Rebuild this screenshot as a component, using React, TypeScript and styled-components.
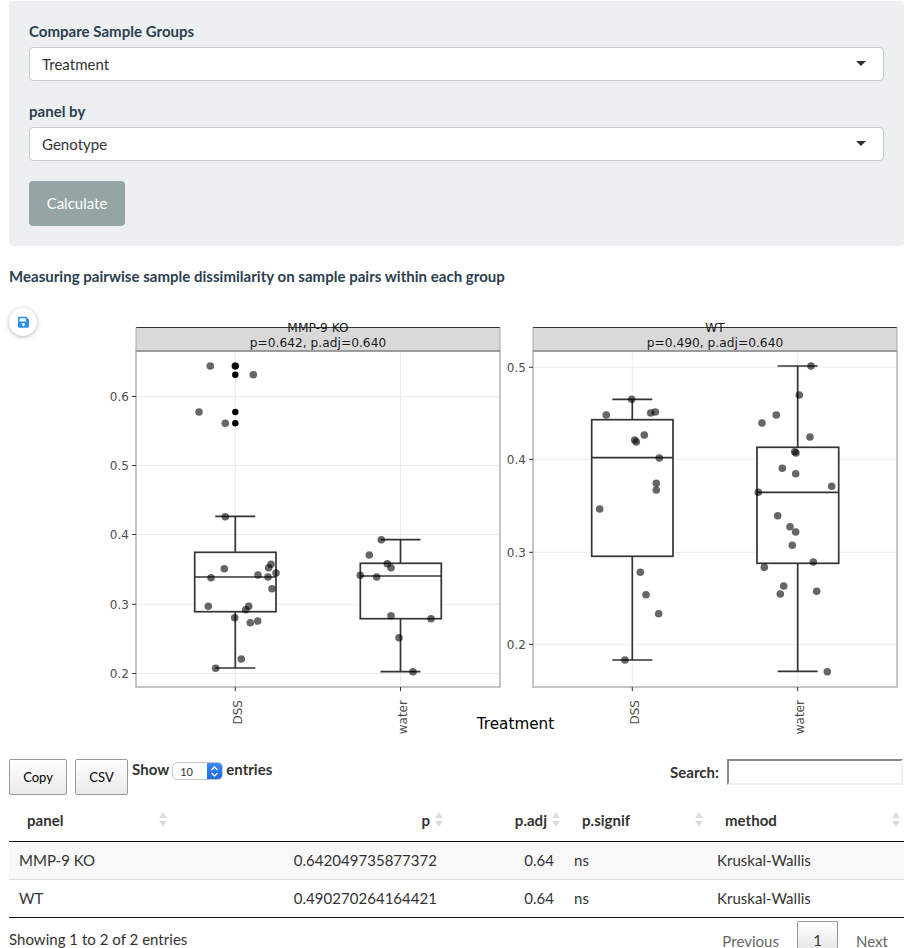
import { FC } from 'react';
import styled, { createGlobalStyle } from 'styled-components';
import { FaSave } from 'react-icons/fa';

type Pt = [number, number];

interface BoxData {
  label: string;
  labelX: number;
  cx: number;
  left: number;
  right: number;
  q3: number;
  median: number;
  q1: number;
  top: number;
  bottom: number;
}

interface FacetData {
  title: string;
  stat: string;
  left: number;
  right: number;
  ticks: { label: string; y: number }[];
  boxes: BoxData[];
  outliers: Pt[];
  points: Pt[];
}

const facets: FacetData[] = [
  {
    title: 'MMP-9 KO',
    stat: 'p=0.642, p.adj=0.640',
    left: 136,
    right: 500,
    ticks: [
      { label: '0.6', y: 396.5 },
      { label: '0.5', y: 465.5 },
      { label: '0.4', y: 534.5 },
      { label: '0.3', y: 604.3 },
      { label: '0.2', y: 673.5 },
    ],
    boxes: [
      { label: 'DSS', labelX: 241.5, cx: 235.3, left: 194.7, right: 276, q3: 552.3, median: 577, q1: 611.7, top: 516.3, bottom: 668 },
      { label: 'water', labelX: 407, cx: 400.5, left: 360.3, right: 441.3, q3: 563.3, median: 576, q1: 618.7, top: 539.7, bottom: 671.7 },
    ],
    outliers: [[235.3, 366], [235.3, 366], [235.3, 374.7], [235.3, 412], [235.3, 423.3]],
    points: [
      [210.3, 366], [235.3, 366], [253.3, 374.7], [199, 412], [225.3, 423.3], [225.3, 516.7],
      [224.3, 568.7], [211, 577.7], [258, 575], [268, 577], [276, 573], [268.7, 567.7], [271, 564.3],
      [272, 588.7], [208.3, 606.3], [248.7, 606.3], [245.7, 609.7], [234.7, 617.7], [257.7, 621],
      [250.3, 622.7], [241.3, 659], [215.7, 668.3],
      [381.3, 539.7], [369.3, 555], [387.3, 563.7], [391, 567.7], [360.3, 575.3], [376.7, 577],
      [391, 615.7], [431, 618.7], [399, 637.7], [413, 671.7],
    ],
  },
  {
    title: 'WT',
    stat: 'p=0.490, p.adj=0.640',
    left: 533,
    right: 897,
    ticks: [
      { label: '0.5', y: 367.3 },
      { label: '0.4', y: 459.3 },
      { label: '0.3', y: 552.3 },
      { label: '0.2', y: 644.3 },
    ],
    boxes: [
      { label: 'DSS', labelX: 638.5, cx: 632.3, left: 591.7, right: 673, q3: 419.7, median: 457.7, q1: 556.3, top: 399.3, bottom: 660 },
      { label: 'water', labelX: 804, cx: 797.7, left: 757, right: 838.7, q3: 447.3, median: 492.3, q1: 563.3, top: 366, bottom: 671.3 },
    ],
    outliers: [],
    points: [
      [631.7, 399.3], [606.3, 415], [650.7, 413], [655.3, 412], [644.3, 435], [634.7, 440], [636.3, 442],
      [659.3, 458], [656.3, 483.3], [656.3, 490], [599.7, 509], [640.3, 572.3], [646, 594.7],
      [658.7, 613.7], [625, 660],
      [811, 366], [799.3, 395], [762, 423], [776.3, 415], [810, 437], [794.7, 451.7], [796, 453],
      [782.3, 468.3], [795.7, 473.7], [831.7, 486.3], [758.3, 492.3], [777.7, 515.7], [790, 526.7],
      [795.7, 532], [792.3, 545.3], [813.3, 562], [764.3, 567.3], [783.7, 586], [780.3, 594],
      [816.7, 591.3], [827.3, 671.7],
    ],
  },
];

const rows = [
  { panel: 'MMP-9 KO', p: '0.642049735877372', adj: '0.64', signif: 'ns', method: 'Kruskal-Wallis' },
  { panel: 'WT', p: '0.490270264164421', adj: '0.64', signif: 'ns', method: 'Kruskal-Wallis' },
];

const STRIP_TOP = 327.5;
const PANEL_TOP = 351;
const PANEL_BOTTOM = 687;

const Facet: FC<{ data: FacetData }> = ({ data }) => {
  const { left, right } = data;
  const mid = (left + right) / 2;
  return (
    <g>
      <rect x={left} y={STRIP_TOP} width={right - left} height={PANEL_TOP - STRIP_TOP} fill="#d9d9d9" />
      {data.ticks.map((t) => (
        <line key={t.label} x1={left} x2={right} y1={t.y} y2={t.y} stroke="#ebebeb" strokeWidth="1" />
      ))}
      {data.boxes.map((b) => (
        <line key={b.label} x1={b.cx} x2={b.cx} y1={PANEL_TOP} y2={PANEL_BOTTOM} stroke="#ebebeb" strokeWidth="1" />
      ))}
      {data.boxes.map((b) => (
        <g key={b.label} stroke="#333" strokeWidth="1.7" fill="none">
          <line x1={b.cx} x2={b.cx} y1={b.top} y2={b.bottom} />
          <line x1={b.cx - 20} x2={b.cx + 20} y1={b.top} y2={b.top} />
          <line x1={b.cx - 20} x2={b.cx + 20} y1={b.bottom} y2={b.bottom} />
          <rect x={b.left} y={b.q3} width={b.right - b.left} height={b.q1 - b.q3} fill="#fff" />
          <line x1={b.left} x2={b.right} y1={b.median} y2={b.median} />
        </g>
      ))}
      {data.outliers.map(([x, y], i) => (
        <circle key={i} cx={x} cy={y} r="3.2" fill="#000" />
      ))}
      {data.points.map(([x, y], i) => (
        <circle key={i} cx={x} cy={y} r="3.8" fill="#000" fillOpacity="0.6" />
      ))}
      <rect x={left} y={PANEL_TOP} width={right - left} height={PANEL_BOTTOM - PANEL_TOP} fill="none" stroke="#b3b3b3" strokeWidth="1.5" />
      <line x1={left} x2={right} y1={PANEL_TOP} y2={PANEL_TOP} stroke="#8f8f8f" strokeWidth="1.3" />
      <line x1={left} x2={right} y1={STRIP_TOP} y2={STRIP_TOP} stroke="#333" strokeWidth="1" />
      <line x1={left} x2={left} y1={STRIP_TOP} y2={PANEL_TOP} stroke="#aaa" strokeWidth="1" />
      <line x1={right} x2={right} y1={STRIP_TOP} y2={PANEL_TOP} stroke="#aaa" strokeWidth="1" />
      <StripText x={mid} y={332}>{data.title}</StripText>
      <StripText x={mid} y={347}>{data.stat}</StripText>
      {data.ticks.map((t) => (
        <g key={t.label}>
          <line x1={left - 4} x2={left} y1={t.y} y2={t.y} stroke="#333" strokeWidth="1" />
          <TickText x={left - 7} y={t.y + 4.5}>{t.label}</TickText>
        </g>
      ))}
      {data.boxes.map((b) => (
        <g key={b.label}>
          <line x1={b.cx} x2={b.cx} y1={PANEL_BOTTOM} y2={PANEL_BOTTOM + 4} stroke="#333" strokeWidth="1" />
          <TickText transform={`translate(${b.labelX} 700) rotate(-90)`}>{b.label}</TickText>
        </g>
      ))}
    </g>
  );
};

const SortIcon: FC = () => (
  <SortSvg viewBox="0 0 8 16" aria-hidden="true">
    <path d="M4 0 L8 6.5 H0 Z" fill="#dcdcdc" />
    <path d="M4 16 L8 9.5 H0 Z" fill="#dcdcdc" />
  </SortSvg>
);

const App: FC = () => {
  return (
    <Page>
      <GlobalStyle />
      <ControlPanel>
        <FormGroup>
          <FieldLabel>Compare Sample Groups</FieldLabel>
          <SelectBox>
            Treatment
            <Caret />
          </SelectBox>
        </FormGroup>
        <FormGroup>
          <FieldLabel>panel by</FieldLabel>
          <SelectBox>
            Genotype
            <Caret />
          </SelectBox>
        </FormGroup>
        <CalcButton type="button">Calculate</CalcButton>
      </ControlPanel>

      <SectionTitle>Measuring pairwise sample dissimilarity on sample pairs within each group</SectionTitle>

      <ChartArea>
        <SaveButton type="button">
          <FaSave />
        </SaveButton>
        <svg width="908" height="445" viewBox="0 300 908 445">
          {facets.map((f) => (
            <Facet key={f.title} data={f} />
          ))}
          <AxisTitle x={515.5} y={729}>Treatment</AxisTitle>
        </svg>
      </ChartArea>

      <TableTools>
        <ExportButton type="button" $width={58}>Copy</ExportButton>
        <ExportButton type="button" $width={53}>CSV</ExportButton>
        <LengthLabel>
          Show
          <LengthSelect>
            <span>10</span>
            <Stepper>
              <svg width="9" height="13" viewBox="0 0 9 13" fill="none" stroke="#fff" strokeWidth="1.3">
                <path d="M1.5 5 L4.5 2 L7.5 5" />
                <path d="M1.5 8 L4.5 11 L7.5 8" />
              </svg>
            </Stepper>
          </LengthSelect>
          entries
        </LengthLabel>
        <SearchLabel>
          Search:
          <SearchInput />
        </SearchLabel>
      </TableTools>

      <DataTable>
        <colgroup>
          <col width="162" />
          <col width="276" />
          <col width="117" />
          <col width="143" />
          <col width="197" />
        </colgroup>
        <thead>
          <tr>
            <HeadCell><HeadInner>panel<SortIcon /></HeadInner></HeadCell>
            <HeadCell><HeadInner $right>p<SortIcon /></HeadInner></HeadCell>
            <HeadCell><HeadInner $right>p.adj<SortIcon /></HeadInner></HeadCell>
            <HeadCell><HeadInner>p.signif<SortIcon /></HeadInner></HeadCell>
            <HeadCell><HeadInner>method<SortIcon /></HeadInner></HeadCell>
          </tr>
        </thead>
        <tbody>
          {rows.map((r, i) => (
            <BodyRow key={r.panel} $odd={i % 2 === 0}>
              <Cell>{r.panel}</Cell>
              <Cell $right>{r.p}</Cell>
              <Cell $right>{r.adj}</Cell>
              <Cell>{r.signif}</Cell>
              <Cell>{r.method}</Cell>
            </BodyRow>
          ))}
        </tbody>
      </DataTable>

      <TableFooter>
        <span>Showing 1 to 2 of 2 entries</span>
        <Pager>
          <PagerLink>Previous</PagerLink>
          <PagerCurrent>1</PagerCurrent>
          <PagerLink>Next</PagerLink>
        </Pager>
      </TableFooter>
    </Page>
  );
};

const GlobalStyle = createGlobalStyle`
  html, body {
    margin: 0;
    padding: 0;
    height: 948px;
    overflow: hidden;
    background: #fff;
  }
  * {
    box-sizing: border-box;
  }
`;

const Page = styled.div`
  width: 908px;
  height: 948px;
  overflow: hidden;
  padding: 1px 4px 0 9px;
  font-family: Lato, 'Liberation Sans', sans-serif;
  font-size: 15px;
  letter-spacing: 0.025px;
  color: #333;
`;

const ControlPanel = styled.div`
  background: #ecf0f1;
  border-radius: 4px;
  padding: 20px;
  height: 245px;
`;

const FormGroup = styled.div`
  margin-bottom: 20px;
`;

const FieldLabel = styled.div`
  font-weight: 700;
  line-height: 21px;
  margin-bottom: 5px;
  color: #2c3e50;
`;

const SelectBox = styled.div`
  position: relative;
  height: 34px;
  line-height: 32px;
  padding-left: 12px;
  background: #fff;
  border: 1px solid #ccc;
  border-radius: 4px;
  color: #333;
`;

const Caret = styled.span`
  position: absolute;
  right: 17px;
  top: 13px;
  width: 0;
  height: 0;
  border-left: 5px solid transparent;
  border-right: 5px solid transparent;
  border-top: 5px solid #333;
`;

const CalcButton = styled.button`
  display: block;
  width: 96px;
  height: 45px;
  padding: 0 0 2px;
  background: #95a5a6;
  border: 0;
  border-radius: 4px;
  color: #fff;
  font: inherit;
`;

const SectionTitle = styled.div`
  margin-top: 20px;
  font-weight: 700;
  line-height: 21px;
  color: #2c3e50;
`;

const ChartArea = styled.div`
  position: relative;
  margin: 13px 0 0 -9px;
  height: 445px;
  width: 908px;

  svg {
    display: block;
  }
`;

const SaveButton = styled.button`
  position: absolute;
  left: 9px;
  top: 8px;
  width: 28px;
  height: 28px;
  padding: 0;
  display: flex;
  align-items: center;
  justify-content: center;
  background: #fff;
  border: 0;
  border-radius: 50%;
  box-shadow: 0 1px 4px rgba(0, 0, 0, 0.3);
  color: #2a8cfb;

  svg {
    width: 11px;
    height: 12.5px;
  }
`;

const StripText = styled.text`
  font-family: 'DejaVu Sans', sans-serif;
  font-size: 12.2px;
  fill: #1a1a1a;
  text-anchor: middle;
`;

const TickText = styled.text`
  font-family: 'DejaVu Sans', sans-serif;
  font-size: 12px;
  fill: #4d4d4d;
  text-anchor: end;
`;

const AxisTitle = styled.text`
  font-family: 'DejaVu Sans', sans-serif;
  font-size: 15.2px;
  fill: #000;
  text-anchor: middle;
`;

const TableTools = styled.div`
  display: flex;
  align-items: flex-start;
  padding-top: 14px;
  height: 56px;
`;

const ExportButton = styled.button<{ $width: number }>`
  width: ${(p) => p.$width}px;
  height: 36px;
  padding: 0;
  margin-right: 8px;
  background: linear-gradient(to bottom, #fff 0%, #e9e9e9 100%);
  border: 1px solid #999;
  border-radius: 2px;
  color: #000;
  font-family: Lato, 'Liberation Sans', sans-serif;
  font-size: 13px;

  & + & {
    margin-right: 4px;
  }
`;

const LengthLabel = styled.div`
  display: flex;
  align-items: center;
  gap: 3px;
  font-weight: 700;
  line-height: 21px;
  color: #333;
`;

const LengthSelect = styled.div`
  display: flex;
  align-items: center;
  justify-content: space-between;
  width: 51px;
  height: 18px;
  margin-top: 3px;
  padding-left: 7px;
  background: #fff;
  border: 1px solid #c8c8c8;
  border-radius: 5px;
  font-weight: 400;
  font-size: 11px;
  overflow: hidden;
`;

const Stepper = styled.span`
  display: flex;
  align-items: center;
  justify-content: center;
  width: 15px;
  height: 18px;
  background: linear-gradient(to bottom, #3e8ef7, #1a66e8);
`;

const SearchLabel = styled.div`
  display: flex;
  align-items: center;
  gap: 8px;
  margin: 0 1px 0 auto;
  font-weight: 700;
  color: #333;
`;

const SearchInput = styled.div`
  width: 176px;
  height: 26px;
  background: #fff;
  border-style: solid;
  border-width: 2px;
  border-color: #8a8a8a #efefef #efefef #8a8a8a;
`;

const DataTable = styled.table`
  width: 895px;
  table-layout: fixed;
  border-collapse: collapse;
  border-bottom: 1px solid #111;
`;

const HeadCell = styled.th`
  height: 40px;
  padding: 0 0 2px;
  border-bottom: 1px solid #111;
  font-weight: 700;
  color: #333;
`;

const HeadInner = styled.div<{ $right?: boolean }>`
  display: flex;
  align-items: center;
  justify-content: ${(p) => (p.$right ? 'flex-end' : 'space-between')};
  gap: 5px;
  padding: 0 4px 0 18px;
`;

const SortSvg = styled.svg`
  width: 8px;
  height: 15px;
  flex: none;
`;

const BodyRow = styled.tr<{ $odd: boolean }>`
  height: 38px;
  background: ${(p) => (p.$odd ? '#f9f9f9' : '#fff')};
  border-top: 1px solid #ddd;

  thead + tbody &:first-child {
    border-top: 0;
  }
`;

const Cell = styled.td<{ $right?: boolean }>`
  padding: 0 10px;
  text-align: ${(p) => (p.$right ? 'right' : 'left')};
  color: #333;
`;

const TableFooter = styled.div`
  display: flex;
  justify-content: space-between;
  align-items: flex-start;
  color: #333;
  line-height: 21px;
  padding-top: 11px;
`;

const Pager = styled.div`
  display: flex;
  align-items: flex-start;
  gap: 18px;
  margin: -8px 16px 0 0;
`;

const PagerLink = styled.span`
  padding-top: 10px;
  color: #666;
`;

const PagerCurrent = styled.span`
  width: 41px;
  height: 27px;
  padding-top: 8px;
  text-align: center;
  color: #333;
  background: linear-gradient(to bottom, #fff 0%, #e8e8e8 100%);
  border: 1px solid #979797;
  border-bottom: 0;
  border-radius: 2px 2px 0 0;
`;

export default App;
